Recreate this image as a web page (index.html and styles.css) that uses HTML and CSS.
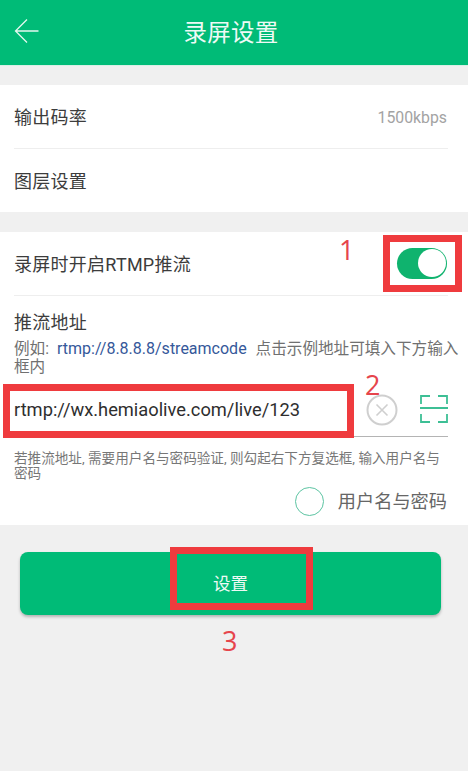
FILE: index.html
```html
<!DOCTYPE html>
<html lang="zh-CN">
<head>
<meta charset="utf-8">
<title>录屏设置</title>
<link rel="stylesheet" href="styles.css">
</head>
<body>
<div class="screen">
  <header class="topbar">
    <svg class="back" viewBox="0 0 26 26" width="26" height="26"><path d="M24.500 13H1.500M13 1.500 1.500 13 13 24.500" fill="none" stroke="#e4f8ef" stroke-width="1.300"/></svg>
    <h1 class="title">录屏设置</h1>
  </header>

  <section class="card card-first">
    <div class="row row-a">
      <span class="label">输出码率</span>
      <span class="value">1500kbps</span>
    </div>
    <div class="row row-b">
      <span class="label">图层设置</span>
    </div>
  </section>

  <section class="card card-second">
    <div class="row row-toggle">
      <span class="label">录屏时开启RTMP推流</span>
      <span class="switch"><span class="knob"></span></span>
    </div>
    <div class="push">
      <div class="label push-title">推流地址</div>
      <div class="hint">
        <div class="hint-line"><span class="prefix">例如:</span><span class="link">rtmp://8.8.8.8/streamcode</span><span>点击示例地址可填入下方输入</span></div>
        <div class="hint-line">框内</div>
      </div>
      <div class="url-row">
        <span class="url">rtmp://wx.hemiaolive.com/live/123</span>
        <svg class="clear" viewBox="0 0 32 32" width="32" height="32"><circle cx="16" cy="16" r="14.500" fill="none" stroke="#cfcfcf" stroke-width="2"/><path d="M10.500 10.500 21.500 21.500M21.500 10.500 10.500 21.500" stroke="#cfcfcf" stroke-width="1.600"/></svg>
        <svg class="scan" viewBox="0 0 28 28" width="28" height="28"><path d="M1 9V1H10M18 1H27V9M1 19V27H10M18 27H27V19" fill="none" stroke="#3dbf95" stroke-width="1.800"/><path d="M0 13H28" fill="none" stroke="#3dbf95" stroke-width="2"/></svg>
      </div>
      <div class="note">
        <div class="note-line">若推流地址, 需要用户名与密码验证, 则勾起右下方复选框, 输入用户名与</div>
        <div class="note-line">密码</div>
      </div>
      <div class="auth">
        <span class="radio"></span>
        <span class="auth-label">用户名与密码</span>
      </div>
    </div>
  </section>

  <div class="action">
    <button class="submit" type="button">设置</button>
  </div>

  <div class="mark box-1"></div>
  <div class="mark box-2"></div>
  <div class="mark box-3"></div>
  <span class="num num-1">1</span>
  <span class="num num-2">2</span>
  <span class="num num-3">3</span>
</div>
</body>
</html>
```

FILE: styles.css
```css
* { box-sizing: border-box; }
html, body { margin: 0; padding: 0; }
body {
  background: #f0f0f0;
  font-family: Roboto, "Noto Sans CJK SC", sans-serif;
  color: #3c3c3c;
}
.screen { position: relative; width: 468px; height: 771px; overflow: hidden; background: #f0f0f0; }

.topbar {
  height: 66px;
  background: #00bb77;
  border-bottom: 1px solid #d8efe6;
  display: flex;
  align-items: center;
  justify-content: center;
  position: relative;
  padding-top: 1px;
}
.back { position: absolute; left: 14px; top: 18px; }
.title { margin: 0 6px 0 0; font-size: 23.500px; font-weight: 400; line-height: 32px; color: #eefaf5; letter-spacing: 0.200px; }

.card { background: #fff; }
.card-first { margin-top: 19px; height: 127px; padding: 0 20px 0 14px; }
.card-second { margin-top: 20px; height: 293px; }

.row { display: flex; align-items: center; justify-content: space-between; }
.row-a { height: 64px; padding-top: 2px; border-bottom: 1px solid #eeeeee; }
.row-b { height: 63px; padding-top: 2px; }
.label { font-size: 18px; line-height: 26px; color: #3c3c3c; letter-spacing: 0.250px; }
.value { font-size: 15.800px; color: #a3a3a3; margin-right: 1px; }

.row-toggle { height: 64px; margin: 0 20px 0 14px; padding: 2px 1px 0 0; border-bottom: 1px solid #eeeeee; }
.switch { width: 50px; height: 31px; border-radius: 16px; background: #0fb36e; position: relative; display: block; margin-top: -3px; }
.knob { position: absolute; right: 1px; top: 1.500px; width: 28px; height: 28px; border-radius: 50%; background: #fff; }

.push { padding: 14px 9px 0 14px; }
.push-title { line-height: 26px; }
.hint { margin: 4px 0 0; font-size: 15.600px; line-height: 18px; color: #707070; }
.hint-line { white-space: nowrap; height: 18px; }
.prefix { display: inline-block; width: 43px; }
.link { color: #35589a; font-size: 16px; margin-right: 9px; }

.url-row {
  margin: 9px 11px 0 0;
  height: 52px;
  border-bottom: 1px solid #b4b4b4;
  display: flex;
  align-items: center;
}
.url { flex: 1; font-size: 18.300px; color: #2e2e2e; margin-top: 1px; padding-bottom: 3px; }
.clear { margin-right: 22px; margin-bottom: 1px; }
.scan { margin-bottom: 3px; }

.note { margin: 14px 0 0; font-size: 13.600px; line-height: 15px; color: #777; }
.note-line { white-space: nowrap; height: 15px; }
.auth { display: flex; justify-content: flex-end; align-items: center; margin: 5px 12px 0 0; gap: 14px; }
.radio { width: 29px; height: 29px; border-radius: 50%; border: 1.500px solid #5cc4a2; }
.auth-label { font-size: 18.200px; line-height: 29px; color: #666; padding-top: 1px; }

.action { padding: 27px 27px 0 20px; }
.submit {
  display: block;
  width: 421px;
  height: 63px;
  border: 0;
  border-radius: 8px;
  background: #00bb77;
  box-shadow: 0 2px 3px rgba(0, 0, 0, 0.250);
  color: #eefaf5;
  font: 400 17.500px/22px Roboto, "Noto Sans CJK SC", sans-serif;
  padding: 1px 0 0;
}

.mark { position: absolute; border: 7px solid #ef3b3e; }
.box-1 { left: 383px; top: 235px; width: 79px; height: 57px; }
.box-2 { left: 3px; top: 384px; width: 351px; height: 54px; }
.box-3 { left: 170px; top: 547px; width: 143px; height: 63px; }

.num { position: absolute; font: 400 27px/30px "Open Sans", sans-serif; color: #e6454c; }
.num-1 { left: 339px; top: 235px; }
.num-2 { left: 365px; top: 370px; }
.num-3 { left: 222px; top: 626px; }
```
